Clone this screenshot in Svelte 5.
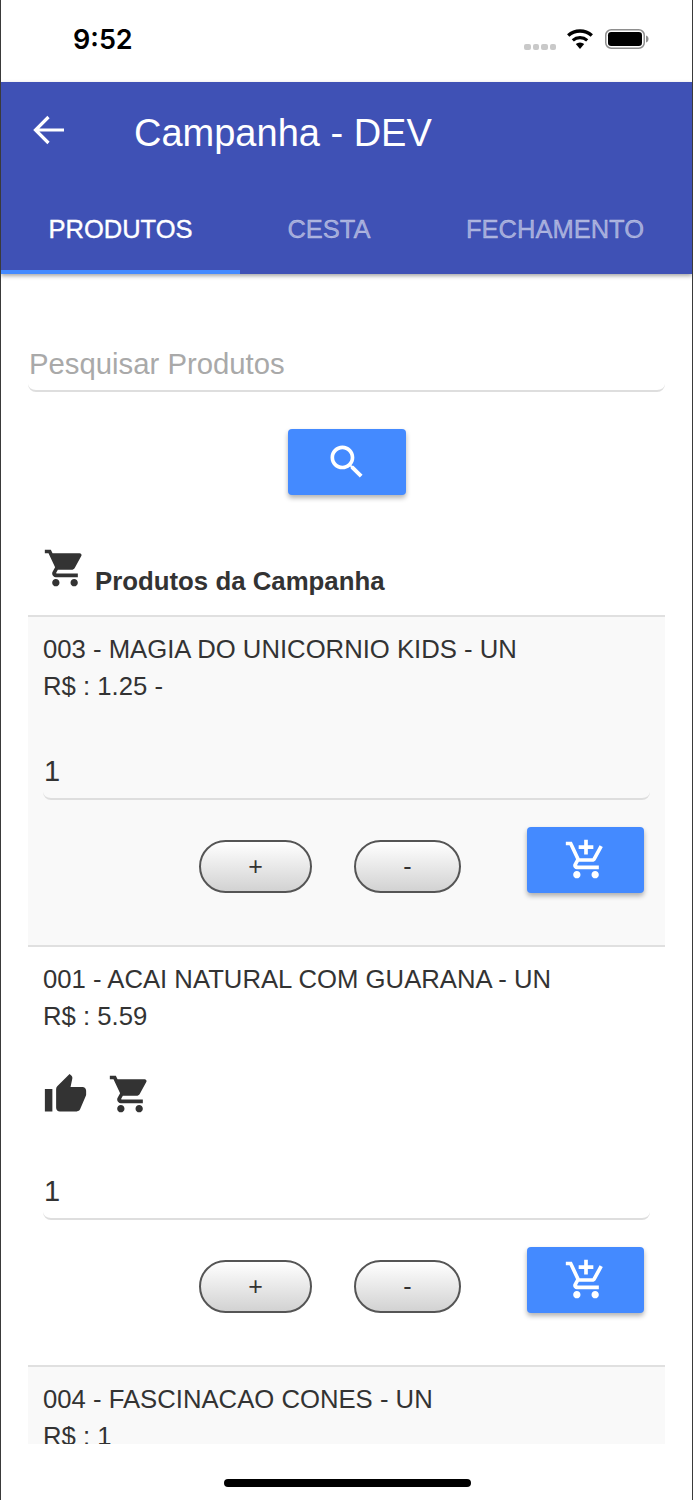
<script lang="ts">
	const CART = 'M7 18c-1.1 0-1.99.9-1.99 2S5.9 22 7 22s2-.9 2-2-.9-2-2-2zM1 2v2h2l3.6 7.59-1.35 2.45c-.16.28-.25.61-.25.96 0 1.1.9 2 2 2h12v-2H7.42c-.14 0-.25-.11-.25-.25l.03-.12.9-1.63h7.45c.75 0 1.41-.41 1.75-1.03l3.58-6.49c.08-.14.12-.31.12-.48 0-.55-.45-1-1-1H5.21l-.94-2H1zm16 16c-1.1 0-1.99.9-1.99 2s.89 2 1.99 2 2-.9 2-2-.9-2-2-2z';
	const ADD_CART = 'M11 9h2V6h3V4h-3V1h-2v3H8v2h3v3zm-4 9c-1.1 0-1.99.9-1.99 2S5.9 22 7 22s2-.9 2-2-.9-2-2-2zm10 0c-1.1 0-1.99.9-1.99 2s.89 2 1.99 2 2-.9 2-2-.9-2-2-2zm-9.83-3.25l.03-.12.9-1.63h7.45c.75 0 1.41-.41 1.75-1.03l3.86-7.01L19.42 4h-.01l-1.1 2-2.76 5H8.53l-.13-.27L6.16 6l-.95-2-.94-2H1v2h2l3.6 7.59-1.35 2.45c-.16.28-.25.61-.25.96 0 1.1.9 2 2 2h12v-2H7.42c-.13 0-.25-.11-.25-.25z';
	const SEARCH = 'M15.5 14h-.79l-.28-.27C15.41 12.59 16 11.11 16 9.5 16 5.91 13.09 3 9.5 3S3 5.91 3 9.5 5.91 16 9.5 16c1.61 0 3.09-.59 4.23-1.57l.27.28v.79l5 4.99L20.49 19l-4.99-5zm-6 0C7.01 14 5 11.99 5 9.5S7.01 5 9.5 5 14 7.01 14 9.5 11.99 14 9.5 14z';
	const THUMB = 'M1 21h4V9H1v12zm22-11c0-1.1-.9-2-2-2h-6.31l.95-4.57.03-.32c0-.41-.17-.79-.44-1.06L14.17 1 7.59 7.59C7.22 7.95 7 8.45 7 9v10c0 1.1.9 2 2 2h9c.83 0 1.54-.5 1.84-1.22l3.02-7.05c.09-.23.14-.47.14-.73v-2z';

	const tabs = ['PRODUTOS', 'CESTA', 'FECHAMENTO'];

	const produtos = [
		{ nome: '003 - MAGIA DO UNICORNIO KIDS - UN', preco: 'R$ : 1.25 -', qtd: '1', destaque: false, alt: true },
		{ nome: '001 - ACAI NATURAL COM GUARANA - UN', preco: 'R$ : 5.59', qtd: '1', destaque: true, alt: false },
		{ nome: '004 - FASCINACAO CONES - UN', preco: 'R$ : 1', qtd: '1', destaque: false, alt: true }
	];
</script>

<div class="Screen">
	<div class="Status">
		<span class="Status__time">9:52</span>
		<div class="Status__icons">
			<span class="Status__dots"><i></i><i></i><i></i><i></i></span>
			<svg class="Status__wifi" viewBox="0 0 28 20" width="28" height="20">
				<path d="M14 20l-4.2-5a6.4 6.4 0 0 1 8.4 0z" fill="#000" />
				<path d="M6.8 11.4a11 11 0 0 1 14.4 0" fill="none" stroke="#000" stroke-width="3.2" />
				<path d="M2.2 6.6a17.6 17.6 0 0 1 23.6 0" fill="none" stroke="#000" stroke-width="3.4" />
			</svg>
			<svg class="Status__battery" viewBox="0 0 44 20" width="44" height="20">
				<rect x="0.75" y="0.75" width="38.5" height="18.5" rx="5.5" fill="none" stroke="#8e8e8e" stroke-width="1.5" />
				<rect x="3" y="3" width="34" height="14" rx="3.2" fill="#000" />
				<path d="M41 6.5c1.6.5 2.5 1.8 2.5 3.5s-.9 3-2.5 3.5z" fill="#8e8e8e" />
			</svg>
		</div>
	</div>

	<header class="Bar">
		<div class="Bar__top">
			<svg class="Bar__back" viewBox="0 0 32 30" width="32" height="30">
				<path d="M31 15H3M15.5 2L2.5 15l13 13" fill="none" stroke="#fff" stroke-width="3.2" />
			</svg>
			<span class="Bar__title">Campanha - DEV</span>
		</div>
		<nav class="Tabs">
			{#each tabs as t, i (t)}
				<span class="Tabs__tab" class:Tabs__tab--on={i === 0}>{t}</span>
			{/each}
		</nav>
	</header>

	<main class="Content">
		<div class="Search">
			<div class="Search__input">Pesquisar Produtos</div>
			<div class="Search__action">
				<button class="Action">
					<svg viewBox="0 0 24 24" width="44" height="44"><path d={SEARCH} fill="#fff" /></svg>
				</button>
			</div>
		</div>

		<div class="Heading">
			<svg viewBox="0 0 24 24" width="44" height="44"><path d={CART} fill="#333" /></svg>
			<span>Produtos da Campanha</span>
		</div>

		<div class="List">
			{#each produtos as p (p.nome)}
				<section class="Item" class:Item--alt={p.alt}>
					<p class="Item__name">{p.nome}</p>
					<p class="Item__price">{p.preco}</p>
					{#if p.destaque}
						<div class="Item__flags">
							<svg viewBox="0 0 24 24" width="45" height="45"><path d={THUMB} fill="#333" /></svg>
							<svg viewBox="0 0 24 24" width="44" height="44"><path d={CART} fill="#333" /></svg>
						</div>
					{/if}
					<div class="Item__qty">{p.qtd}</div>
					<div class="Item__actions">
						<button class="Pill Pill--plus">+</button>
						<button class="Pill Pill--minus">-</button>
						<button class="Action">
							<svg viewBox="0 0 24 24" width="44" height="44"><path d={ADD_CART} fill="#fff" /></svg>
						</button>
					</div>
				</section>
			{/each}
		</div>
	</main>

	<div class="Home"><span></span></div>
</div>

<style>
	:global(body) {
		margin: 0;
		background: #fff;
	}

	.Screen {
		box-sizing: border-box;
		width: 693px;
		height: 1500px;
		border-left: 1px solid #3a3a3a;
		border-right: 1px solid #3a3a3a;
		background: #fff;
		font-family: 'Liberation Sans', Arial, sans-serif;
		color: #333;
		display: flex;
		flex-direction: column;
		overflow: hidden;
	}

	.Status {
		height: 82px;
		flex: none;
		display: flex;
		justify-content: space-between;
		align-items: flex-start;
		padding: 0 43px 0 72px;
	}

	.Status__time {
		margin-top: 23px;
		font-family: Inter, 'Liberation Sans', sans-serif;
		font-size: 27px;
		line-height: 34px;
		font-weight: 600;
		color: #000;
	}

	.Status__icons {
		display: flex;
		align-items: flex-start;
		margin-top: 29px;
	}

	.Status__dots {
		display: flex;
		gap: 2px;
		margin: 15px 10px 0 0;
	}

	.Status__dots i {
		width: 6.5px;
		height: 6px;
		border-radius: 2px;
		background: #c9c9c9;
	}

	.Status__wifi {
		margin-right: 11px;
	}

	.Bar {
		flex: none;
		height: 192px;
		background: #3f51b5;
		box-shadow: 0 2px 4px rgba(0, 0, 0, 0.35);
		position: relative;
		display: flex;
		flex-direction: column;
	}

	.Bar__top {
		height: 99px;
		display: flex;
		align-items: center;
		padding-left: 32px;
		flex: none;
	}

	.Bar__back {
		margin-top: -3px;
	}

	.Bar__title {
		margin-left: 69px;
		font-size: 38px;
		color: #fff;
		margin-top: 4px;
	}

	.Tabs {
		flex: 1;
		display: grid;
		grid-template-columns: 239px 178px 1fr;
	}

	.Tabs__tab {
		display: flex;
		align-items: center;
		justify-content: center;
		font-size: 25.5px;
		font-weight: 400;
		-webkit-text-stroke: 0.4px currentColor;
		color: rgba(255, 255, 255, 0.5);
		box-sizing: border-box;
		border-bottom: 4px solid transparent;
		padding-top: 7px;
	}

	.Tabs__tab--on {
		color: #fff;
		border-bottom-color: #448aff;
	}

	.Content {
		flex: none;
		height: 1170px;
		overflow: hidden;
		padding: 0 27px 0 27px;
	}

	.Search__input {
		margin-top: 69px;
		padding: 0 1px;
		height: 49px;
		line-height: 41px;
		font-size: 29.3px;
		color: #a9a9a9;
		border-bottom: 2px solid #dedede;
		border-radius: 0 0 8px 8px;
		box-sizing: border-box;
	}

	.Search__action {
		display: flex;
		justify-content: center;
		margin-top: 37px;
	}

	.Action {
		width: 118px;
		height: 66px;
		border: 0;
		padding: 0;
		border-radius: 4px;
		background: #448aff;
		box-shadow: 0 3px 5px rgba(0, 0, 0, 0.3);
		display: flex;
		align-items: center;
		justify-content: center;
	}

	.Heading {
		margin-top: 48px;
		height: 72px;
		display: flex;
		align-items: flex-start;
		padding-left: 15px;
		box-sizing: border-box;
		font-size: 25.8px;
		font-weight: 700;
	}

	.Heading svg {
		margin-top: 3px;
	}

	.Heading span {
		margin: 24px 0 0 8px;
	}

	.Item {
		border-top: 2px solid #e0e0e0;
		padding: 14px 15px 0;
		box-sizing: border-box;
		height: 330px;
	}

	.Item:nth-child(2) {
		height: 420px;
	}

	.Item--alt {
		background: #f9f9f9;
	}

	.Item p {
		margin: 0;
		font-size: 25.7px;
		line-height: 37px;
	}

	.Item__flags {
		display: flex;
		align-items: center;
		gap: 20px;
		margin-top: 28px;
		height: 62px;
	}

	.Item__qty {
		margin: 49px 0 0;
		width: 607px;
		height: 46px;
		line-height: 34px;
		font-size: 29px;
		border-bottom: 2px solid #dedede;
		border-radius: 0 0 8px 8px;
		box-sizing: border-box;
		padding-left: 1px;
	}

	.Item__actions {
		display: flex;
		align-items: flex-start;
		margin-top: 27px;
		padding-left: 156px;
	}

	.Item__actions .Action {
		width: 117px;
	}

	.Pill {
		margin-top: 13px;
		height: 53px;
		border: 2px solid #555;
		border-radius: 27px;
		background: linear-gradient(#fff, #d2d2d2);
		font-family: inherit;
		font-size: 25px;
		color: #333;
		padding: 0;
	}

	.Pill--plus {
		width: 113px;
		margin-right: 42px;
	}

	.Pill--minus {
		width: 107px;
		margin-right: 66px;
	}

	.Home {
		flex: 1;
		display: flex;
		justify-content: center;
		padding: 35px 0 0 2px;
	}

	.Home span {
		width: 247px;
		height: 8px;
		border-radius: 4px;
		background: #000;
	}
</style>
